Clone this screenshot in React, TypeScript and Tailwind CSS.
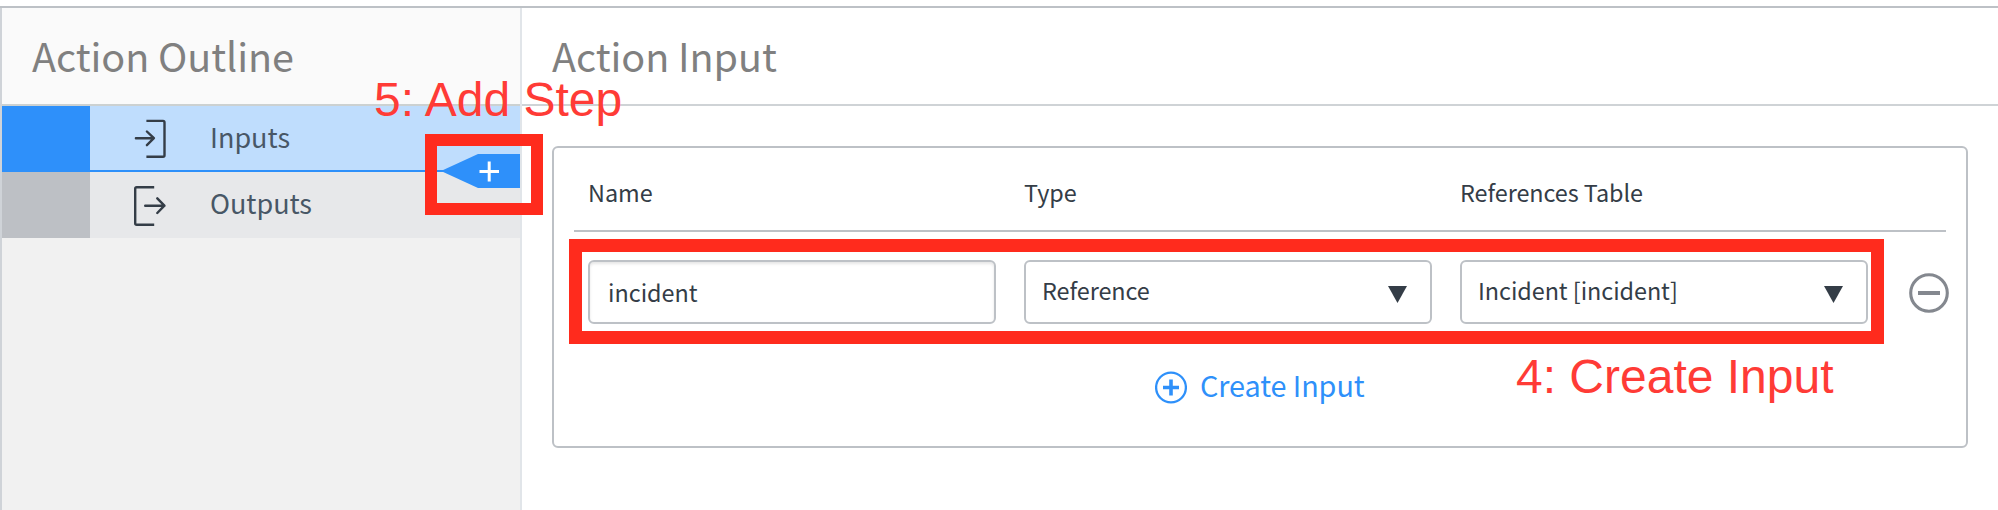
import type { ReactNode } from "react";

function InputIcon() {
  return (
    <svg className="block h-[41px] w-[32px]" viewBox="0 0 32 41" fill="none" stroke="#343d47" strokeWidth="2.4" strokeLinecap="round" strokeLinejoin="round">
      <path d="M12.4 2.9H29Q30.5 2.9 30.5 4.4V37.3Q30.5 38.8 29 38.8H12.4" strokeLinecap="butt" />
      <path d="M1.9 20.2H19.8M12.9 13.5L19.9 20.2L12.9 27.2" />
    </svg>
  );
}

function OutputIcon() {
  return (
    <svg className="block h-[42px] w-[33px]" viewBox="0 0 33 42" fill="none" stroke="#343d47" strokeWidth="2.4" strokeLinecap="round" strokeLinejoin="round">
      <path d="M21.2 2.2H3.7Q2.2 2.2 2.2 3.7V38.3Q2.2 39.8 3.7 39.8H21.2" strokeLinecap="butt" />
      <path d="M12.2 20.7H31.4M24.3 13.3L31.4 20.7L24.3 28" />
    </svg>
  );
}

function Caret() {
  return (
    <svg className="mt-[4px] block h-[17px] w-[19px]" viewBox="0 0 19 17">
      <path d="M0 0H19L9.5 17Z" fill="#343d47" />
    </svg>
  );
}

function Select({ children }: { children: ReactNode }) {
  return (
    <div className="flex h-[64px] w-[408px] shrink-0 items-center justify-between rounded-[6px] border-2 border-[#bdc1c6] bg-white pr-[23px] pl-[16px]">
      <span className="pb-[2px] tracking-[-0.05px]">{children}</span>
      <Caret />
    </div>
  );
}

export default function App() {
  return (
    <div className="relative flex h-[510px] w-[1998px] flex-col overflow-hidden bg-white pt-[6px] font-['Noto_Sans_CJK_SC','Noto_Sans',sans-serif] leading-none whitespace-nowrap text-[#343d47]">
      <div className="flex flex-1 border-t-2 border-[#bdc1c6]">
        <aside className="flex w-[522px] flex-col border-r-2 border-l-2 border-r-[#e1e5e9] border-l-[#cfd3d8] bg-[#f1f1f1]">
          <h1 className="flex h-[98px] items-center border-b-2 border-[#ccd1d1] bg-[#fafafa] pb-[3px] pl-[30px] text-[39.5px] tracking-[-0.05px] text-[#808080]">
            Action Outline
          </h1>
          <div className="flex h-[66px] text-[27px] text-[#485766]">
            <div className="w-[88px] bg-[#2e90fa]" />
            <div className="flex flex-1 items-start border-b-2 border-[#2e90fa] bg-[#bfddfd] pt-[12px] pl-[44px]">
              <InputIcon />
              <span className="pt-[5px] pl-[44px]">Inputs</span>
            </div>
          </div>
          <div className="flex h-[66px] text-[27px] text-[#485766]">
            <div className="w-[88px] bg-[#bdc0c5]" />
            <div className="flex flex-1 items-start bg-[#e7e8ea] pt-[13px] pl-[43px]">
              <OutputIcon />
              <span className="pt-[4px] pl-[44px] tracking-[-0.05px]">Outputs</span>
            </div>
          </div>
        </aside>

        <main className="flex flex-1 flex-col">
          <h1 className="flex h-[98px] items-center border-b-2 border-[#cfd3d6] pb-[3px] pl-[30px] text-[39.5px] tracking-[-0.05px] text-[#808080]">
            Action Input
          </h1>
          <section className="mt-[40px] ml-[30px] h-[302px] w-[1416px] rounded-[6px] border-2 border-[#bdc1c6] px-[20px] text-[23.4px]">
            <div className="flex h-[84px] w-[1372px] gap-[28px] border-b-2 border-[#bdc1c6] pt-[33px] pl-[14px]">
              <span className="w-[408px]">Name</span>
              <span className="w-[408px]">Type</span>
              <span className="w-[408px] tracking-[-0.05px]">References Table</span>
            </div>
            <div className="mt-[28px] flex items-center gap-[28px] pl-[14px]">
              <div className="flex h-[64px] w-[408px] shrink-0 items-center rounded-[6px] border-2 border-[#bdc1c6] pt-[2px] pl-[18px] shadow-[inset_0_2px_3px_rgba(0,0,0,0.1)]">
                incident
              </div>
              <Select>Reference</Select>
              <Select>Incident [incident]</Select>
              <svg className="mt-[2px] ml-[13px] block h-[40px] w-[40px] shrink-0" viewBox="0 0 40 40" fill="none" stroke="#84888f">
                <circle cx="20" cy="20" r="18.3" strokeWidth="3.1" />
                <path d="M9 20H31" strokeWidth="4" />
              </svg>
            </div>
            <div className="mt-[47px] flex pl-[581px] text-[28.8px] text-[#2e90fa]">
              <svg className="block h-[33px] w-[32px]" viewBox="0 0 32 33" fill="none" stroke="#2e90fa">
                <circle cx="16" cy="16.5" r="14.9" strokeWidth="2.3" />
                <path d="M8 16.5H24M16 8.5V24.5" strokeWidth="3.6" />
              </svg>
              <span className="pl-[13px] tracking-[-0.08px]">Create Input</span>
            </div>
          </section>
        </main>
      </div>

      <svg className="absolute top-[154px] left-[441px] h-[34px] w-[79px]" viewBox="0 0 79 34">
        <path d="M0 17L37 0H79V34H37Z" fill="#2e90fa" />
        <path d="M38.5 17.5H58M48.2 7.5V27.5" stroke="#fff" strokeWidth="3" />
      </svg>
      <div className="absolute top-[134px] left-[425px] h-[81px] w-[118px] border-[12.6px] border-[#ff2b1d]" />
      <div className="absolute top-[239px] left-[569px] h-[105px] w-[1315px] border-[13px] border-[#ff2b1d]" />
      <div className="absolute top-[76px] left-[374px] font-['Liberation_Sans',Arial,sans-serif] text-[48px] text-[#ff3b36]">5: Add Step</div>
      <div className="absolute top-[353px] left-[1516px] font-['Liberation_Sans',Arial,sans-serif] text-[48px] text-[#ff3b36]">4: Create Input</div>
    </div>
  );
}
